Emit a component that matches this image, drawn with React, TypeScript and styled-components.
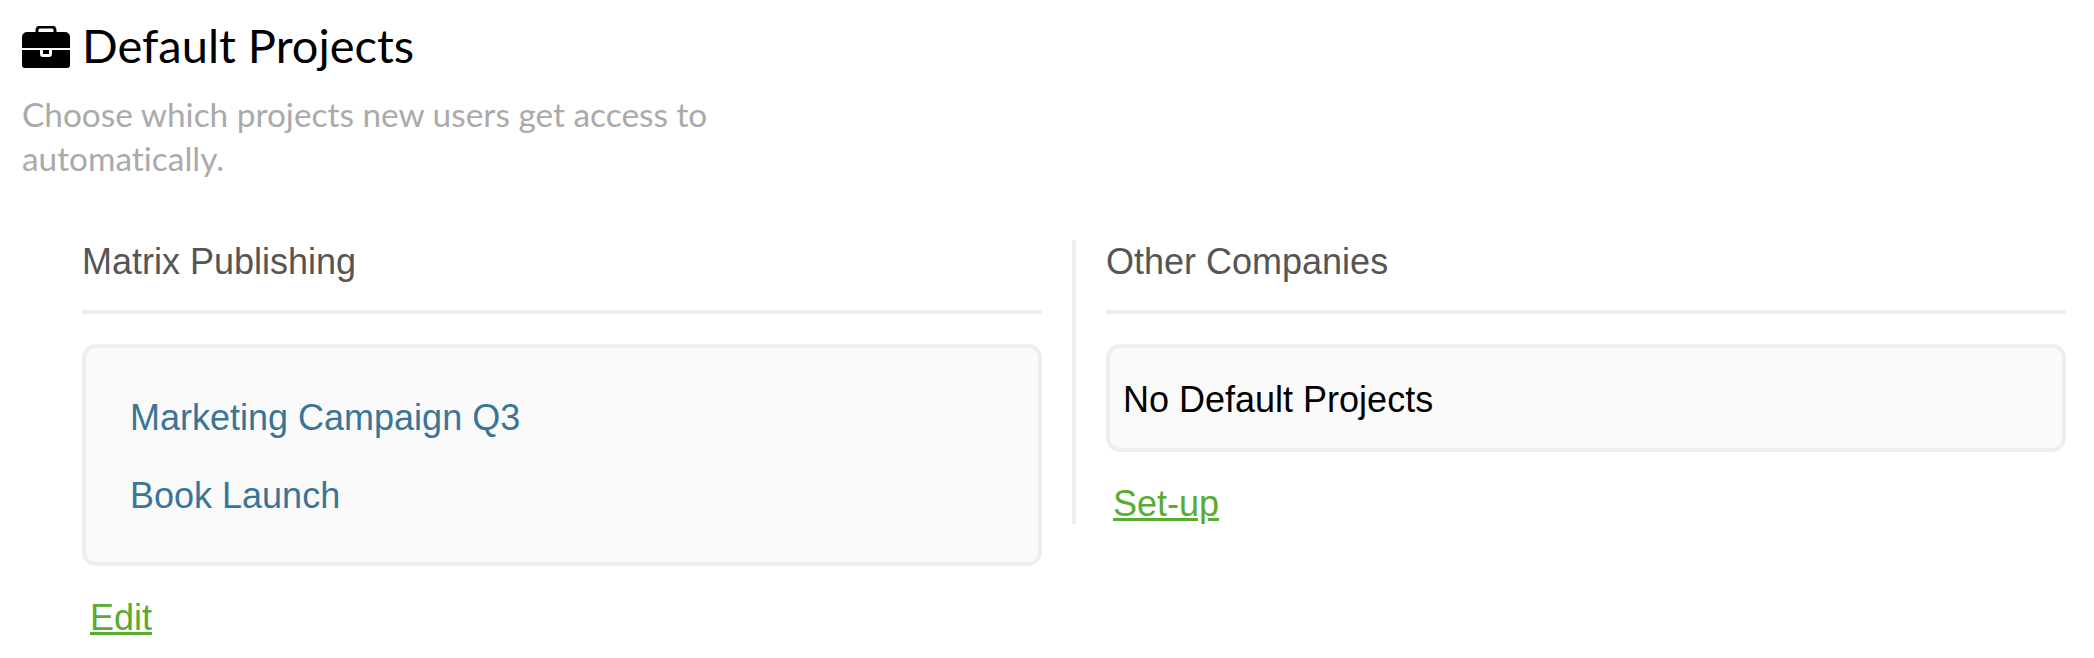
import styled, { createGlobalStyle } from 'styled-components';

const GlobalStyle = createGlobalStyle`
  html, body {
    margin: 0;
    padding: 0;
    background: #fff;
  }
`;

const Page = styled.div`
  width: 2094px;
  height: 658px;
  padding: 20px 28px 0 22px;
  box-sizing: border-box;
  overflow: hidden;
  font-family: "Liberation Sans", Arial, sans-serif;
`;

const TitleRow = styled.div`
  display: flex;
  align-items: center;
  gap: 12px;
  height: 54px;
`;

const Title = styled.h1`
  margin: 0 0 4px;
  font-family: Lato, "Open Sans", sans-serif;
  font-size: 47px;
  line-height: 54px;
  font-weight: 400;
  font-variant-ligatures: none;
  color: #000;
`;

const Subtitle = styled.p`
  margin: 18px 0 0;
  width: 730px;
  font-family: Lato, "Open Sans", sans-serif;
  font-size: 33.4px;
  line-height: 44px;
  font-variant-ligatures: none;
  color: #aaa;
`;

const Columns = styled.div`
  display: grid;
  grid-template-columns: 990px 994px;
  margin: 60px 0 0 60px;
  align-items: start;
`;

const Column = styled.section<{ $divided?: boolean }>`
  box-sizing: border-box;
  ${p => p.$divided
    ? `border-left: 4px solid #eee; padding-left: 30px; height: 284px;`
    : `padding-right: 30px;`}
`;

const ColumnHead = styled.h2`
  margin: 0;
  padding-top: 1px;
  height: 69px;
  box-sizing: content-box;
  border-bottom: 4px solid #eee;
  font-size: 36px;
  line-height: 42px;
  font-weight: 400;
  color: #555;
`;

const Well = styled.div<{ $spacious?: boolean }>`
  box-sizing: border-box;
  margin-top: 30px;
  border: 4px solid #eee;
  border-radius: 14px;
  background: #fafafa;
  padding: ${p => (p.$spacious ? '31px 44px 27px' : '30px 13px 26px')};
`;

const ProjectLink = styled.a`
  display: block;
  font-size: 36px;
  line-height: 78px;
  color: #3a7597;
  text-decoration: none;
`;

const EmptyText = styled.div`
  font-size: 36px;
  line-height: 44px;
  color: #000;
`;

const ActionLink = styled.a<{ $offset: number }>`
  display: inline-block;
  margin: 30px 0 0 ${p => p.$offset}px;
  font-size: 36px;
  line-height: 44px;
  color: #58ac30;
  text-decoration: underline;
`;

function BriefcaseIcon() {
  return (
    <svg width="48" height="42" viewBox="0 0 48 42" aria-hidden="true">
      <path
        d="M15 7V4a3 3 0 0 1 3-3h12a3 3 0 0 1 3 3v3"
        fill="none"
        stroke="#000"
        strokeWidth="3"
      />
      <path d="M5 6h38a5 5 0 0 1 5 5v11H0V11a5 5 0 0 1 5-5Z" fill="#000" />
      <path
        d="M0 24h18v4a3 3 0 0 0 3 3h6a3 3 0 0 0 3-3v-4h18v15a3 3 0 0 1-3 3H3a3 3 0 0 1-3-3Z"
        fill="#000"
      />
      <rect x="21" y="24" width="6" height="4" fill="#000" />
    </svg>
  );
}

function App() {
  return (
    <Page>
      <GlobalStyle />
      <TitleRow>
        <BriefcaseIcon />
        <Title>Default Projects</Title>
      </TitleRow>
      <Subtitle>Choose which projects new users get access to automatically.</Subtitle>
      <Columns>
        <Column>
          <ColumnHead>Matrix Publishing</ColumnHead>
          <Well $spacious>
            <ProjectLink>Marketing Campaign Q3</ProjectLink>
            <ProjectLink>Book Launch</ProjectLink>
          </Well>
          <ActionLink $offset={8}>Edit</ActionLink>
        </Column>
        <Column $divided>
          <ColumnHead>Other Companies</ColumnHead>
          <Well>
            <EmptyText>No Default Projects</EmptyText>
          </Well>
          <ActionLink $offset={7}>Set-up</ActionLink>
        </Column>
      </Columns>
    </Page>
  );
}

export default App;
